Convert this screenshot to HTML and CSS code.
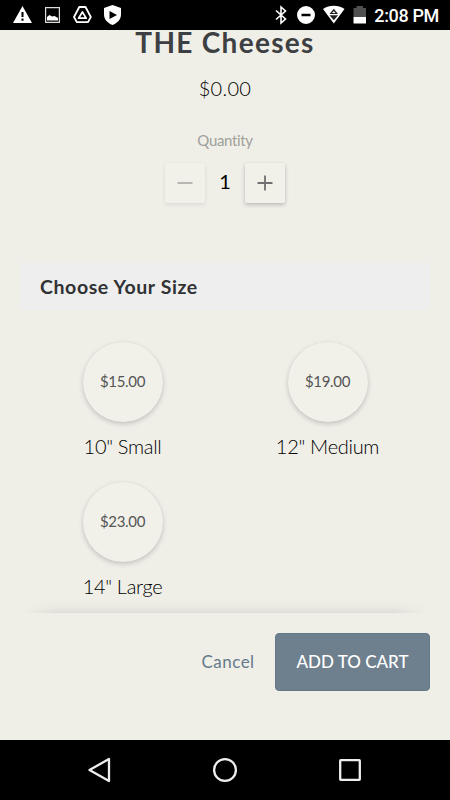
FILE: index.html
```html
<!DOCTYPE html>
<html lang="en">
<head>
<meta charset="utf-8">
<title>Item options</title>
<link rel="stylesheet" href="styles.css">
</head>
<body>
<div class="screen">
  <header class="status">
    <svg class="notifications" width="110" height="30" viewBox="13 0 110 30" fill="#fff">
      <path fill-rule="evenodd" d="M22.5 6 32 23H13zM21.5 12v5h2v-5zM21.5 18.5v2.2h2v-2.2z"/>
      <path fill="none" stroke="#ddd" stroke-width="1.2" d="M45.6 7.6h13.8v14.8H45.6z"/>
      <path d="M47 20.5v-3.500l2.500-2 2.500 1.500 2.500-.5 3.500 2v2.500z"/>
      <path fill="none" stroke="#fff" stroke-width="1.8" stroke-linejoin="round" d="M79.3 7h6.2l5.3 10-2.8 5.1H76.8L74 17z"/>
      <path fill="none" stroke="#fff" stroke-width="1.7" stroke-linejoin="round" d="M82.4 12l3.8 6.2h-7.6z"/>
      <path fill-rule="evenodd" d="M112.5 5l8.5 3v6.5c0 5-3.6 8.500-8.500 10.500-4.900-2-8.500-5.500-8.500-10.500V8zM109.500 11v8l7.500-4z"/>
    </svg>
    <div class="system">
      <svg width="93" height="30" viewBox="274 0 93 30" fill="#fff">
        <path fill="none" stroke="#fff" stroke-width="1.6" d="M276 10.500l9.500 8.500-4.500 4V7l4.500 4-9.500 8.500"/>
        <path fill-rule="evenodd" d="M306 6a9 9 0 1 0 0 18a9 9 0 0 0 0-18M301.500 13.800h9v2.400h-9z"/>
        <path d="M323 9c6.500-4.200 15-4.200 21.500 0l-10.700 14.500z"/>
        <path fill="#222" d="M333.800 8.800l4.300 5.200h-8.600zM329.500 15.200h8.600l-4.300 5z"/>
        <path d="M333.800 10.900l1.700 2h-3.400z"/>
        <path fill="#505050" d="M353.500 8h3V6h6.500v2h3v9h-12.500z"/>
        <path d="M353.500 17H366v6.500h-12.500z"/>
      </svg>
      <span class="clock">2:08 PM</span>
    </div>
  </header>
  <main class="content">
    <h1 class="title">THE Cheeses</h1>
    <div class="price">$0.00</div>
    <div class="quantity-label">Quantity</div>
    <div class="stepper">
      <button class="step off" aria-label="Decrease"><svg width="16" height="16" viewBox="0 0 16 16"><path d="M.5 8h15"/></svg></button>
      <span class="count">1</span>
      <button class="step" aria-label="Increase"><svg width="16" height="16" viewBox="0 0 16 16"><path d="M.5 8h15M8 .5v15"/></svg></button>
    </div>
    <h2 class="section">Choose Your Size</h2>
    <div class="sizes">
      <div class="size"><div class="disc">$15.00</div><div class="name">10" Small</div></div>
      <div class="size"><div class="disc">$19.00</div><div class="name">12" Medium</div></div>
      <div class="size"><div class="disc">$23.00</div><div class="name">14" Large</div></div>
    </div>
  </main>
  <footer class="actions">
    <button class="cancel">Cancel</button>
    <button class="add">ADD TO CART</button>
  </footer>
  <nav class="nav">
    <svg width="26" height="26" viewBox="0 0 26 26"><path d="M22 2v22L2.500 13z"/></svg>
    <svg width="26" height="26" viewBox="0 0 26 26"><circle cx="13" cy="13" r="10.900"/></svg>
    <svg width="26" height="26" viewBox="0 0 26 26"><rect x="3.200" y="3.200" width="19.600" height="19.600" rx=".5"/></svg>
  </nav>
</div>
</body>
</html>
```
FILE: styles.css
```css
* { box-sizing: border-box; }
body { margin: 0; background: #efefe8; font-family: Lato, "Open Sans", sans-serif; color: #222; }
button { border: 0; padding: 0; font-family: inherit; background: none; }
svg { display: block; flex: none; }
.screen { width: 450px; height: 800px; display: flex; flex-direction: column; overflow: hidden; }
.status { height: 30px; flex: none; background: #000; display: flex; justify-content: space-between; padding: 0 11px 0 13px; }
.system { display: flex; gap: 7px; }
.clock { font: 500 18px/32px Roboto, sans-serif; color: #fff; white-space: nowrap; letter-spacing: -0.35px; }
.content { height: 582px; flex: none; display: flex; flex-direction: column; align-items: center; }
.title { margin: 0; font-size: 28px; line-height: 24px; font-weight: 700; color: #3d4042; letter-spacing: 1.3px; }
.price { margin-top: 21px; height: 26px; font-size: 20px; line-height: 26px; font-weight: 300; color: #000; letter-spacing: 0.3px; }
.quantity-label { margin-top: 29px; height: 20px; font-size: 15px; line-height: 20px; color: #a0a09c; letter-spacing: -0.35px; }
.stepper { margin-top: 13px; display: flex; width: 120px; height: 40px; justify-content: space-between; align-items: center; }
.step { width: 40px; height: 40px; border-radius: 2px; background: #f1f1ea; display: flex; align-items: center; justify-content: center; box-shadow: 0 2px 4px rgba(0,0,0,.2), 0 0 2px rgba(0,0,0,.07); }
.step svg { fill: none; stroke: #707070; stroke-width: 1.8; }
.off { box-shadow: 0 2px 4px rgba(0,0,0,.08), 0 0 2px rgba(0,0,0,.04); }
.off svg { stroke: #b0b0ab; }
.count { font-size: 20px; line-height: 36px; height: 40px; color: #000; }
.section { margin: 60px 0 0; width: 410px; height: 49px; padding-left: 20px; background: #eee; font-size: 19.5px; font-weight: 700; line-height: 47px; color: #303234; letter-spacing: 0.6px; }
.sizes { width: 410px; margin-top: 32px; display: grid; grid-template-columns: 1fr 1fr; grid-auto-rows: 140px; }
.size { display: flex; flex-direction: column; align-items: center; }
.disc { width: 80px; height: 80px; flex: none; border-radius: 50%; background: #f1f1ea; box-shadow: 0 2px 5px rgba(0,0,0,.18), 0 0 2px rgba(0,0,0,.05); text-align: center; font-size: 15px; line-height: 79px; color: #555; letter-spacing: -0.3px; }
.name { margin-top: 10px; font-size: 20px; line-height: 28px; font-weight: 300; color: #000; white-space: nowrap; letter-spacing: -0.3px; }
.actions { position: relative; height: 128px; flex: none; display: flex; justify-content: flex-end; align-items: flex-start; padding: 20.5px 20px 0; }
.actions::before { content: ""; position: absolute; left: 22px; right: 22px; top: -12px; height: 12.6px; background: linear-gradient(to top, rgba(0,0,0,.065), rgba(0,0,0,.025) 40%, transparent); -webkit-mask-image: linear-gradient(to right, transparent, #000 36px, #000 calc(100% - 36px), transparent); mask-image: linear-gradient(to right, transparent, #000 36px, #000 calc(100% - 36px), transparent); }
.cancel { width: 94px; height: 57px; line-height: 57px; font-size: 17px; color: #647a8b; letter-spacing: 0.5px; }
.add { width: 155px; height: 58.5px; border: 1px solid #63798a; border-radius: 4px; background: #6e7f8d; color: #fff; font-size: 17px; line-height: 55px; font-weight: 500; text-align: center; white-space: nowrap; }
.nav { height: 60px; flex: none; background: #000; display: flex; justify-content: space-between; align-items: center; padding: 0 87px; }
.nav svg { fill: none; stroke: #eee; stroke-width: 2.3; stroke-linejoin: round; }
```
